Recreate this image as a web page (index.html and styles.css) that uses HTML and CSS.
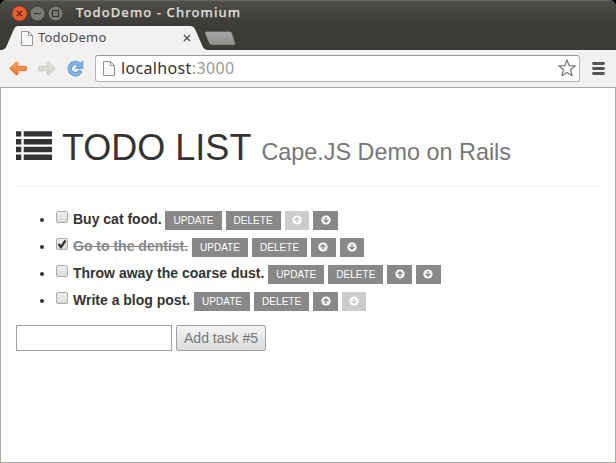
FILE: index.html
```html
<!DOCTYPE html>
<html lang="en">
<head>
<meta charset="utf-8">
<title>TodoDemo</title>
<link rel="stylesheet" href="styles.css">
</head>
<body>
<svg class="defs" width="0" height="0">
  <defs>
    <linearGradient id="orange" x1="0" y1="0" x2="0" y2="1"><stop offset="0" stop-color="#f9ac68"/><stop offset="1" stop-color="#e8702a"/></linearGradient>
    <linearGradient id="silver" x1="0" y1="0" x2="0" y2="1"><stop offset="0" stop-color="#e6e5e3"/><stop offset="1" stop-color="#cfcecb"/></linearGradient>
    <linearGradient id="tabfill" x1="0" y1="0" x2="0" y2="1"><stop offset="0" stop-color="#a6a5a3"/><stop offset="1" stop-color="#92918f"/></linearGradient>
    <symbol id="page" viewBox="0 0 12 15"><path d="M.5.5h7l4 4v10H.5z" fill="#f8f8f8" stroke="#959595"/><path d="M7.500.5v4h4" fill="none" stroke="#959595"/></symbol>
    <symbol id="arrow" viewBox="0 0 18 15"><path d="M.8 7.500 7.500.8 9.500 2.800 7.500 5.300h8.300a2.200 2.200 0 0 1 0 4.400H7.500l2 2.500-2 2z" stroke-linejoin="round"/></symbol>
    <symbol id="up" viewBox="0 0 10 10"><circle cx="5" cy="5" r="4.600" fill="#fff"/><path d="M2.500 5.200 5 2.700l2.500 2.500M5 3v5" fill="none" stroke="currentColor" stroke-width="1.400"/></symbol>
    <symbol id="down" viewBox="0 0 10 10"><circle cx="5" cy="5" r="4.600" fill="#fff"/><path d="M2.500 4.800 5 7.300l2.500-2.500M5 7V2" fill="none" stroke="currentColor" stroke-width="1.400"/></symbol>
  </defs>
</svg>
<div class="window">
  <header class="titlebar">
    <svg class="controls" width="56" height="18" viewBox="0 0 56 18">
      <circle cx="12.500" cy="8.500" r="7.700" fill="#ea5b2e" stroke="#55342a" stroke-width=".8"/><path d="m9.900 5.900 5.200 5.200m0-5.200-5.200 5.200" stroke="#4a2419" stroke-width="1.300"/>
      <circle cx="30.500" cy="8.500" r="7.500" fill="#7b7973" stroke="#33322e" stroke-width=".8"/><path d="M27 8.500h7" stroke="#34332f" stroke-width="1.200"/>
      <circle cx="48.500" cy="8.500" r="7.500" fill="#7b7973" stroke="#33322e" stroke-width=".8"/><path d="M45.500 5.500h6v6h-6z" fill="none" stroke="#34332f" stroke-width="1.200"/>
    </svg>
    <span class="window-title">TodoDemo - Chromium</span>
  </header>
  <div class="tabstrip">
    <div class="tab">
      <svg class="tab-shape" width="205" height="24"><path d="M0 24c3-1 4-2 5-5L12 3c1-2 2-3 4-3h172c2 0 4 1 5 3l7 16c1 3 2 4 5 5z" fill="#f2f1f0"/></svg>
      <svg class="tab-icon" width="12" height="15"><use href="#page"/></svg>
      <span class="tab-title">TodoDemo</span>
      <svg class="tab-close" width="8" height="8"><path d="m1 1 6 6m0-6L1 7" stroke="#5b5b5b" stroke-width="1.600"/></svg>
    </div>
    <svg class="new-tab" width="32" height="15"><path d="M3 .5h22c1.500 0 2.500.5 3 2l3 9c.5 1.500 0 2.500-1.500 2.500H8c-1.500 0-2.500-.8-3-2L1 2.500C.5 1.200 1.500.5 3 .5z" fill="url(#tabfill)" stroke="#55544f" stroke-width=".5"/></svg>
  </div>
  <nav class="toolbar">
    <svg class="back" width="18" height="15" fill="url(#orange)" stroke="#d87534"><use href="#arrow"/></svg>
    <svg class="forward" width="18" height="15" fill="url(#silver)" stroke="#c8c7c4"><use href="#arrow"/></svg>
    <svg class="reload" width="17" height="17" viewBox="0 0 17 17"><path d="M12.700 12.200A5.600 5.600 0 1 1 11.500 4" fill="none" stroke="#5b92c8" stroke-width="4.400" stroke-linecap="round"/><path d="M15.700 1v7.300H8.500z" fill="#82b4e2" stroke="#5b92c8" stroke-linejoin="round"/><path d="M12.700 12.200A5.600 5.600 0 1 1 11.500 4" fill="none" stroke="#82b4e2" stroke-width="3" stroke-linecap="round"/></svg>
    <div class="address">
      <svg width="12" height="15"><use href="#page"/></svg>
      <span class="url">localhost<span class="port">:3000</span></span>
      <svg class="star" width="18" height="18" viewBox="0 0 18 18"><path d="m9 1 2.200 5.700 6 .2-4.700 3.900 1.700 5.900L9 13.400l-5.200 3.300 1.700-5.900L.8 6.900l6-.2z" fill="#fff" stroke="#777" stroke-width="1.200" stroke-linejoin="round"/></svg>
    </div>
    <svg class="menu" width="13" height="13"><path d="M1.500 1.500h10M1.500 6.500h10M1.500 11.500h10" stroke="#555" stroke-width="2.800" stroke-linecap="round"/></svg>
  </nav>
  <main class="page">
    <h1 class="heading">
      <svg class="list-icon" width="36" height="29" fill="#333"><path d="M0 .2h5.300v5.300H0zM7.700.2H36v5.300H7.700zM0 7.900h5.300v5.600H0zM7.700 7.900H36v5.600H7.700zM0 15.700h5.300v5.600H0zM7.700 15.700H36v5.600H7.700zM0 23.600h5.300V29H0zM7.700 23.600H36V29H7.700z"/></svg>
      <span>TODO LIST</span>
      <small>Cape.JS Demo on Rails</small>
    </h1>
    <ul class="tasks">
      <li class="task"><span class="check"></span><span class="name">Buy cat food.</span><button class="btn">UPDATE</button><button class="btn">DELETE</button><button class="btn icon off"><svg><use href="#up"/></svg></button><button class="btn icon"><svg><use href="#down"/></svg></button></li>
      <li class="task"><span class="check"><svg width="12" height="12"><path d="m2.500 6 2.500 3 4.500-6.500" fill="none" stroke="#333" stroke-width="2.300"/></svg></span><span class="name done">Go to the dentist.</span><button class="btn">UPDATE</button><button class="btn">DELETE</button><button class="btn icon"><svg><use href="#up"/></svg></button><button class="btn icon"><svg><use href="#down"/></svg></button></li>
      <li class="task"><span class="check"></span><span class="name">Throw away the coarse dust.</span><button class="btn">UPDATE</button><button class="btn">DELETE</button><button class="btn icon"><svg><use href="#up"/></svg></button><button class="btn icon"><svg><use href="#down"/></svg></button></li>
      <li class="task"><span class="check"></span><span class="name">Write a blog post.</span><button class="btn">UPDATE</button><button class="btn">DELETE</button><button class="btn icon"><svg><use href="#up"/></svg></button><button class="btn icon off"><svg><use href="#down"/></svg></button></li>
    </ul>
    <form class="add"><input class="field" type="text" aria-label="Task"><button class="submit" type="button">Add task #5</button></form>
  </main>
</div>
</body>
</html>
```
FILE: styles.css
```css
* { box-sizing: border-box; }
body { margin: 0; background: #000; overflow: hidden; font-family: "Liberation Sans", sans-serif; }
svg { display: block; flex: none; }
.defs { position: absolute; }
.window { height: 463px; display: flex; flex-direction: column; border-radius: 6px 6px 0 0; overflow: hidden; background: linear-gradient(#504f49, #3c3b37 25px); }
.titlebar { height: 25px; display: flex; align-items: center; border-top: 1px solid #65635c; padding: 1px 0 0 7px; }
.window-title { margin-left: 13px; font: 500 13px/20px "Noto Sans", sans-serif; color: #dfdbd2; letter-spacing: 1.1px; -webkit-text-stroke: .25px #dfdbd2; white-space: nowrap; position: relative; top: -2px; }
.tabstrip { height: 25px; display: flex; padding: 1px 0 0 2px; }
.tab { position: relative; width: 202px; height: 24px; display: flex; align-items: center; padding-left: 19px; }
.tab-shape { position: absolute; left: 0; top: 0; }
.tab-icon, .tab-title, .tab-close { position: relative; }
.tab-title { top: -1px; width: 145px; margin-left: 5px; font: 13px/20px "Noto Sans", sans-serif; color: #4c4c4c; letter-spacing: .2px; }
.new-tab { margin-top: 5px; }
.toolbar { height: 38px; flex: none; display: flex; align-items: center; padding: 0 10px 1px 9px; background: #f2f1f0; border-bottom: 1px solid #aaa6a2; }
.forward { margin-left: 11px; transform: scaleX(-1); }
.reload { margin-left: 12px; position: relative; left: -1px; }
.address { width: 485px; height: 27px; margin-left: 10px; display: flex; align-items: center; padding: 0 3px 0 7px; background: #fff; border: 1px solid #b5b4b2; border-top-color: #999; border-radius: 3px; }
.url { margin-left: 6px; font: 16px/22px "Noto Sans", sans-serif; color: #333; letter-spacing: .35px; }
.port { color: #999; }
.star { margin-left: auto; }
.menu { margin-left: 12px; }
.page { flex: 1; background: #fff; border: solid #aaa6a0; border-width: 0 1px 1px; padding: 40px 15px 0; color: #333; }
.heading { margin: 0 0 19px; height: 59px; display: flex; align-items: baseline; border-bottom: 1px solid #eee; font-size: 36px; line-height: 40px; font-weight: 400; white-space: nowrap; }
.list-icon { margin-right: 10px; }
.heading small { margin-left: 10px; font-size: 23.4px; color: #777; }
.tasks { margin: 0; padding: 0 0 0 40px; font-size: 14px; line-height: 20px; }
.task { height: 27px; display: flex; align-items: center; padding-bottom: 1px; }
.task::before { content: ""; width: 4px; height: 4px; margin: 2px 12px 0 -16px; border-radius: 50%; background: #333; }
.check { width: 12px; height: 12px; margin: -5px 5px 0 0; border: 1px solid #aaa; border-radius: 2px; background: linear-gradient(#eee, #ddd); }
.check svg { margin: -1px; }
.name { font-weight: 700; white-space: nowrap; }
.done { color: #888; text-decoration: line-through; }
.btn { height: 19px; margin: 2px 0 0 4px; padding: 0 8px; border: 0; background: #888; color: #fff; font: 10px/19px "Liberation Sans", sans-serif; letter-spacing: .04px; }
.name + .btn { margin-left: 3.800px; }
.icon { padding: 0 7.300px; color: #888; }
.icon svg { width: 10px; height: 10px; }
.off { background: #ccc; color: #ccc; }
.add { margin: 11px 0 0; display: flex; gap: 4px; }
.field { width: 156px; height: 26px; margin: 0; border: 1px solid #a0a0a0; }
.submit { width: 90px; height: 26px; padding: 0; border: 1px solid #a0a0a0; border-radius: 2px; background: linear-gradient(#f4f4f4, #dcdcdc); color: #777; font: 14px/20px "Liberation Sans", sans-serif; }
```
